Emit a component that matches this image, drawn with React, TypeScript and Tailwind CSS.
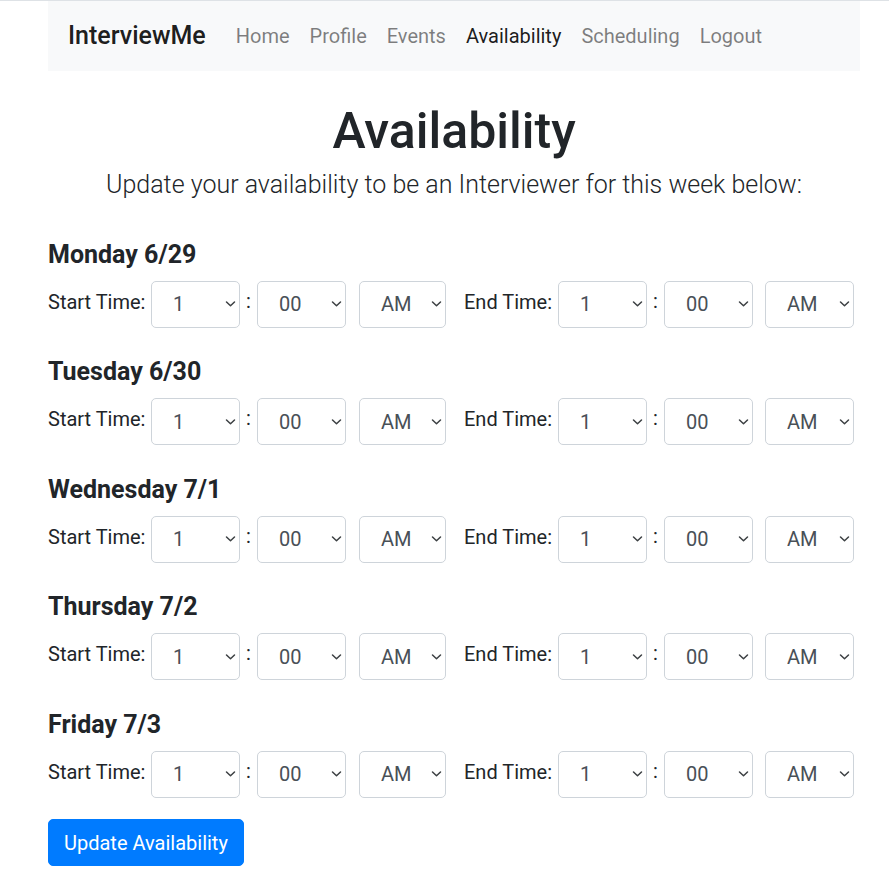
import React from "react";

const Chevron = () => (
  <svg
    className="pointer-events-none absolute right-[4px] top-1/2 -translate-y-1/2"
    width="11"
    height="7"
    viewBox="0 0 11 7"
    fill="none"
  >
    <path d="M1.5 1.5 L5.5 5.3 L9.5 1.5" stroke="#3c4043" strokeWidth="1.5" strokeLinecap="round" strokeLinejoin="round" />
  </svg>
);

const Sel = ({ value, w = "w-[89px]" }: { value: string; w?: string }) => (
  <div className={`relative ${w} h-[47px] shrink-0`}>
    <select
      defaultValue={value}
      className="h-full w-full appearance-none rounded-[5px] border border-[#ced4da] bg-white pl-[21px] pr-[20px] text-[20px] text-[#495057] outline-none"
    >
      <option value={value}>{value}</option>
    </select>
    <Chevron />
  </div>
);

const Colon = () => (
  <div className="w-[17px] shrink-0 pl-[6px] pt-[5px] text-[20px] leading-[30px] text-[#212529]">:</div>
);

const days = ["Monday 6/29", "Tuesday 6/30", "Wednesday 7/1", "Thursday 7/2", "Friday 7/3"];

export default function App() {
  return (
    <div
      className="min-h-[895px] border-t border-[#dee2e6] bg-white text-[#212529]"
      style={{ fontFamily: "Roboto, 'Liberation Sans', sans-serif" }}
    >
      <div className="ml-[48px] w-[812px]">
        <nav className="flex h-[70px] items-center bg-[#f8f9fa] px-[20px]">
          <span className="mr-[20px] text-[25px] font-medium leading-[37.5px] text-black/90">InterviewMe</span>
          <ul className="flex text-[20px] leading-[30px]">
            <li className="px-[10px] text-black/50">Home</li>
            <li className="px-[10px] text-black/50">Profile</li>
            <li className="px-[10px] text-black/50">Events</li>
            <li className="px-[10px] text-black/90">Availability</li>
            <li className="px-[10px] text-black/50">Scheduling</li>
            <li className="px-[10px] text-black/50">Logout</li>
          </ul>
        </nav>

        <h1 className="mt-[30px] text-center text-[50px] font-medium leading-[60px]">Availability</h1>
        <p className="mt-[5px] text-center text-[25px] font-light leading-[37.5px]">
          Update your availability to be an Interviewer for this week below:
        </p>

        <div className="mt-[36px]">
          {days.map((d) => (
            <div key={d} className="mb-[29.5px]">
              <h5 className="mb-[11px] text-[25px] font-bold leading-[30px]">{d}</h5>
              <div className="flex items-start text-[20px] leading-[30px]">
                <div className="w-[103px] shrink-0 pt-[6px]">Start Time:</div>
                <Sel value="1" />
                <Colon />
                <Sel value="00" />
                <div className="w-[13px] shrink-0" />
                <Sel value="AM" w="w-[87px]" />
                <div className="w-[18px] shrink-0" />
                <div className="w-[94px] shrink-0 pt-[6px]">End Time:</div>
                <Sel value="1" />
                <Colon />
                <Sel value="00" />
                <div className="w-[12px] shrink-0" />
                <Sel value="AM" />
              </div>
            </div>
          ))}
        </div>

        <button className="-mt-[8px] h-[47px] rounded-[5px] border border-[#007bff] bg-[#007bff] px-[15px] text-[20px] leading-[30px] text-white">
          Update Availability
        </button>
      </div>
    </div>
  );
}
